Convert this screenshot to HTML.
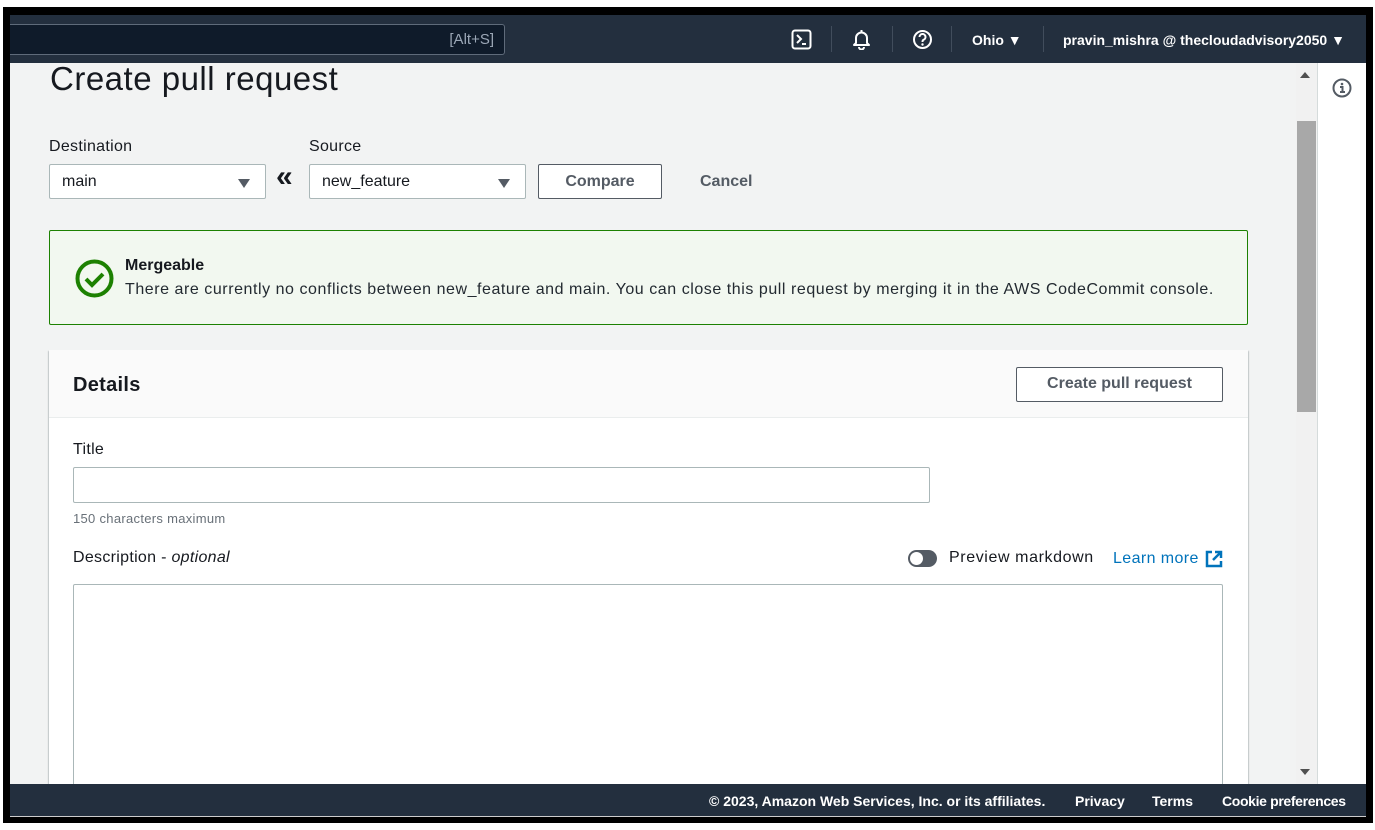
<!DOCTYPE html>
<html><head><meta charset="utf-8">
<style>
*{box-sizing:border-box;margin:0;padding:0}
body{width:1375px;height:830px;background:#fff;position:relative;overflow:hidden;font-family:"Liberation Sans",sans-serif;color:#16191f}
.abs{position:absolute}
#frame{left:3px;top:7px;width:1370px;height:816px;background:#000}
#hdr{left:10px;top:15px;width:1356px;height:48px;background:#232f3e}
#search{left:10px;top:24px;width:495px;height:31px;background:#0f1b2a;border:1px solid #5f6b7a;border-left:none;border-radius:0 3px 3px 0;color:#9ba7b6;font-size:15px;text-align:right;padding:6px 10px 0 0}
.ht{color:#fff;font-size:14px;font-weight:bold}
.sep{width:1px;height:26px;background:#414d5c;top:26px}
#main{left:10px;top:63px;width:1286px;height:721px;background:#f2f3f3;overflow:hidden}
#track{left:1296px;top:63px;width:21px;height:721px;background:#f1f1f1}
#thumb{left:1297px;top:121px;width:19px;height:291px;background:#a8a8a8}
#side{left:1317px;top:63px;width:49px;height:721px;background:#fff;border-left:1px solid #d5dbdb}
#foot{left:10px;top:784px;width:1356px;height:32px;background:#232f3e;color:#fff;font-size:14px;font-weight:bold}
#wl{left:10px;top:816px;width:1356px;height:1px;background:#ccc}
.sel{background:#fff;border:1px solid #aab7b8;border-radius:2px;height:35px;font-size:16px;padding:8px 12px}
.tri{position:absolute;right:15px;top:14px;width:0;height:0;border-left:6px solid transparent;border-right:6px solid transparent;border-top:9px solid #545b64}
.btn{background:#fff;border:1px solid #545b64;border-radius:2px;font-weight:bold;color:#545b64;font-size:16px;text-align:center}
.lbl{font-size:16px;color:#16191f;letter-spacing:.3px}
</style></head><body>
<div id="frame" class="abs"></div>
<div id="hdr" class="abs"></div>
<div id="search" class="abs">[Alt+S]</div>
<svg class="abs" style="left:791px;top:29px" width="21" height="21" viewBox="0 0 21 21"><rect x="1.5" y="1.5" width="18" height="18" rx="2.5" fill="none" stroke="#fff" stroke-width="2"/><path d="M6 6l4 4-4 4M11 15h4" fill="none" stroke="#fff" stroke-width="2"/></svg>
<div class="abs sep" style="left:831px"></div>
<svg class="abs" style="left:851px;top:28px" width="21" height="22" viewBox="0 0 21 22"><path d="M10.5 2v2M5 15V10a5.5 5.5 0 0 1 11 0v5l2 2H3z" fill="none" stroke="#fff" stroke-width="2" stroke-linejoin="round"/><path d="M8 19a2.5 2.5 0 0 0 5 0" fill="none" stroke="#fff" stroke-width="2"/></svg>
<div class="abs sep" style="left:892px"></div>
<svg class="abs" style="left:912px;top:29px" width="21" height="21" viewBox="0 0 21 21"><circle cx="10.5" cy="10.5" r="8.5" fill="none" stroke="#fff" stroke-width="2"/><path d="M7.5 8a3 3 0 1 1 4 2.8c-1 .4-1 1-1 2.2" fill="none" stroke="#fff" stroke-width="2"/><circle cx="10.5" cy="15.5" r="1.2" fill="#fff"/></svg>
<div class="abs sep" style="left:951px"></div>
<div class="abs ht" style="left:972px;top:32px">Ohio ▼</div>
<div class="abs sep" style="left:1043px"></div>
<div class="abs ht" style="left:1063px;top:32px">pravin_mishra @ thecloudadvisory2050 ▼</div>

<div id="main" class="abs">
 <div class="abs" style="left:40px;top:-3px;font-size:33px;letter-spacing:.5px;color:#16191f">Create pull request</div>
 <div class="abs lbl" style="left:39px;top:75px">Destination</div>
 <div class="abs lbl" style="left:299px;top:75px">Source</div>
 <div class="abs sel" style="left:39px;top:101px;width:217px">main<span class="tri"></span></div>
 <div class="abs" style="left:266px;top:97px;font-size:30px;font-weight:bold;color:#16191f">«</div>
 <div class="abs sel" style="left:299px;top:101px;width:217px">new_feature<span class="tri"></span></div>
 <div class="abs btn" style="left:528px;top:101px;width:124px;height:35px;padding-top:8px">Compare</div>
 <div class="abs" style="left:690px;top:110px;font-size:16px;font-weight:bold;color:#545b64">Cancel</div>

 <div class="abs" style="left:39px;top:167px;width:1199px;height:95px;background:#f2f8f0;border:1px solid #1d8102;border-radius:2px">
  <svg class="abs" style="left:24px;top:27px" width="41" height="41" viewBox="0 0 41 41"><circle cx="20.5" cy="20.5" r="17" fill="none" stroke="#1d8102" stroke-width="4"/><path d="M12 21l6 6 11-11" fill="none" stroke="#1d8102" stroke-width="4"/></svg>
  <div class="abs" style="left:75px;top:26px;font-size:16px;font-weight:bold">Mergeable</div>
  <div class="abs" style="left:75px;top:50px;font-size:16px;letter-spacing:.55px;white-space:nowrap;color:#232a31">There are currently no conflicts between new_feature and main. You can close this pull request by merging it in the AWS CodeCommit console.</div>
 </div>

 <div class="abs" style="left:39px;top:287px;width:1199px;height:460px;background:#fff;box-shadow:0 1px 1px rgba(0,28,36,.3),1px 1px 1px rgba(0,28,36,.15),-1px 1px 1px rgba(0,28,36,.15)">
  <div class="abs" style="left:0;top:0;width:1199px;height:68px;background:#fafafa;border-bottom:1px solid #eaeded"></div>
  <div class="abs" style="left:24px;top:24px;font-size:20px;font-weight:bold;letter-spacing:.3px">Details</div>
  <div class="abs btn" style="left:967px;top:17px;width:207px;height:35px;padding-top:7px">Create pull request</div>
  <div class="abs lbl" style="left:24px;top:91px">Title</div>
  <div class="abs" style="left:24px;top:117px;width:857px;height:36px;border:1px solid #aab7b8;border-radius:2px"></div>
  <div class="abs" style="left:24px;top:161px;font-size:13px;letter-spacing:.3px;color:#687078">150 characters maximum</div>
  <div class="abs lbl" style="left:24px;top:199px">Description - <i>optional</i></div>
  <div class="abs" style="left:859px;top:200px;width:29px;height:17px;border-radius:9px;background:#545b64"><div style="position:absolute;left:2px;top:2px;width:13px;height:13px;border-radius:50%;background:#fff"></div></div>
  <div class="abs lbl" style="left:900px;top:199px;letter-spacing:.6px">Preview markdown</div>
  <div class="abs" style="left:1064px;top:200px;font-size:16px;letter-spacing:.4px;color:#0073bb">Learn more</div>
  <svg class="abs" style="left:1156px;top:200px" width="18" height="18" viewBox="0 0 18 18"><path d="M7 2H2v14h14v-5" fill="none" stroke="#0073bb" stroke-width="2.5"/><path d="M10 2h6v6M16 2L8 10" fill="none" stroke="#0073bb" stroke-width="2.5"/></svg>
  <div class="abs" style="left:24px;top:234px;width:1150px;height:240px;border:1px solid #aab7b8;border-radius:2px"></div>
 </div>
</div>
<div id="track" class="abs"></div>
<div id="thumb" class="abs"></div>
<div class="abs" style="left:1300px;top:72px;width:0;height:0;border-left:5px solid transparent;border-right:5px solid transparent;border-bottom:6px solid #505050"></div>
<div class="abs" style="left:1300px;top:769px;width:0;height:0;border-left:5px solid transparent;border-right:5px solid transparent;border-top:6px solid #505050"></div>
<div id="side" class="abs"></div>
<svg class="abs" style="left:1332px;top:78px" width="20" height="20" viewBox="0 0 20 20"><circle cx="10" cy="10" r="8.5" fill="none" stroke="#545b64" stroke-width="2"/><circle cx="10" cy="6" r="1.3" fill="#545b64"/><path d="M8 9h2.5v5M8 14h5" fill="none" stroke="#545b64" stroke-width="2"/></svg>
<div id="foot" class="abs">
 <span class="abs" style="left:699px;top:9px">© 2023, Amazon Web Services, Inc. or its affiliates.</span>
 <span class="abs" style="left:1065px;top:9px">Privacy</span>
 <span class="abs" style="left:1142px;top:9px">Terms</span>
 <span class="abs" style="left:1212px;top:9px;letter-spacing:-.35px">Cookie preferences</span>
</div>
<div id="wl" class="abs"></div>
</body></html>
